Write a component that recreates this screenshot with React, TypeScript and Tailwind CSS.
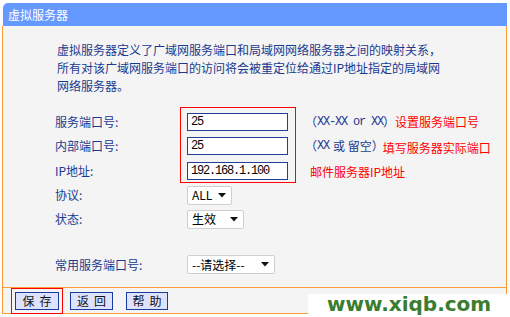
import type { ReactNode } from "react";

const mono = "font-mono tracking-[-1.2px]";

const Arrow = () => (
  <svg width="8" height="5" viewBox="0 0 8 5" className="shrink-0">
    <polygon points="0,0 8,0 4,4.5" fill="#111" />
  </svg>
);

const Row = ({ label, h = 24, children }: { label: string; h?: number; children?: ReactNode }) => (
  <div className="flex items-center" style={{ height: h }}>
    <div className="w-[132px] shrink-0">{label}</div>
    {children}
  </div>
);

const Field = ({ value }: { value: string }) => (
  <div className="h-[18px] w-[101px] shrink-0 border border-[#1f3f99] bg-white pl-[3px] font-mono text-[12px] leading-[16px] tracking-[-1.2px] text-black">
    {value}
  </div>
);

const Select = ({ text, w }: { text: string; w: string }) => (
  <div className={`flex h-[19px] ${w} items-center justify-between rounded-[2px] border border-[#cfcfcf] bg-white pl-[4px] pr-[5px] text-black`}>
    <span className="text-[12px]">{text}</span>
    <Arrow />
  </div>
);

const Btn = ({ label, w }: { label: string; w: string }) => (
  <div className={`flex h-[18px] ${w} items-center justify-center border border-[#1a3c9e] bg-[#dde2ff] pl-[5px] text-[12px] tracking-[5px] text-[#111]`}>
    {label}
  </div>
);

export default function App() {
  return (
    <div className="relative h-[317px] w-[510px] overflow-hidden bg-white font-['Noto_Sans_CJK_SC',sans-serif] text-[12px]">
      <div className="ml-[2px] mt-[3px] w-[505px]">
        <div className="ml-[1px] h-[23px] rounded-tl-[5px] bg-[#6699ff] pl-[5px] text-[12px] leading-[23px] text-white">
          虚拟服务器
        </div>

        <div className="h-[262px] border-x border-b border-[#ff9933] bg-[#f4f4f4] pl-[54px] pt-[15px] text-[#1a3a8f]">
          <p className="leading-[18px]">
            虚拟服务器定义了广域网服务端口和局域网网络服务器之间的映射关系，
            <br />
            所有对该广域网服务端口的访问将会被重定位给通过IP地址指定的局域网
            <br />
            网络服务器。
          </p>

          <div className="relative -ml-[2px] mt-[15px]">
            <div className="absolute left-[125px] top-[-3px] h-[76px] w-[116px] border border-[#ff0000]" />
            <Row label="服务端口号:">
              <Field value="25" />
              <span className="ml-[17px] flex items-center">
                <span>（</span>
                <span className={mono}>XX-XX or XX</span>
                <span>）</span>
              </span>
              <span className="text-[#ff0000]">设置服务端口号</span>
            </Row>
            <Row label="内部端口号:">
              <Field value="25" />
              <span className="ml-[17px] flex items-center">
                <span>（</span>
                <span className={mono}>XX</span>
                <span className="ml-[4px]">或 留空</span>
                <span>）</span>
              </span>
              <span className="-ml-[1px] mt-[4px] text-[#ff0000]">填写服务器实际端口</span>
            </Row>
            <Row label="IP地址:" h={25}>
              <Field value="192.168.1.100" />
              <span className="ml-[22px] mt-[2px] text-[#ff0000]">邮件服务器IP地址</span>
            </Row>
            <Row label="协议:">
              <Select text="ALL" w="w-[45px]" />
            </Row>
            <Row label="状态:">
              <Select text="生效" w="w-[57px]" />
            </Row>
            <div className="h-[21px]" />
            <Row label="常用服务端口号:" h={25}>
              <Select text="--请选择--" w="w-[88px]" />
            </Row>
          </div>
        </div>

        <div className="flex h-[26px] items-center border-x border-b border-[#ff9933] bg-[#f4f4f4] pl-[8px]">
          <div className="border border-[#ff0000] p-[3px]">
            <Btn label="保存" w="w-[44px]" />
          </div>
          <div className="ml-[7px]">
            <Btn label="返回" w="w-[43px]" />
          </div>
          <div className="ml-[13px]">
            <Btn label="帮助" w="w-[42px]" />
          </div>
        </div>
      </div>

      <div className="absolute left-[308px] top-[294px] h-[23px] w-[202px] bg-white pl-[19px]">
        <div className="font-['DejaVu_Sans',sans-serif] text-[20px] font-bold leading-[20px] text-[#3b7d2f]">
          www.xiqb.com
        </div>
      </div>
    </div>
  );
}
